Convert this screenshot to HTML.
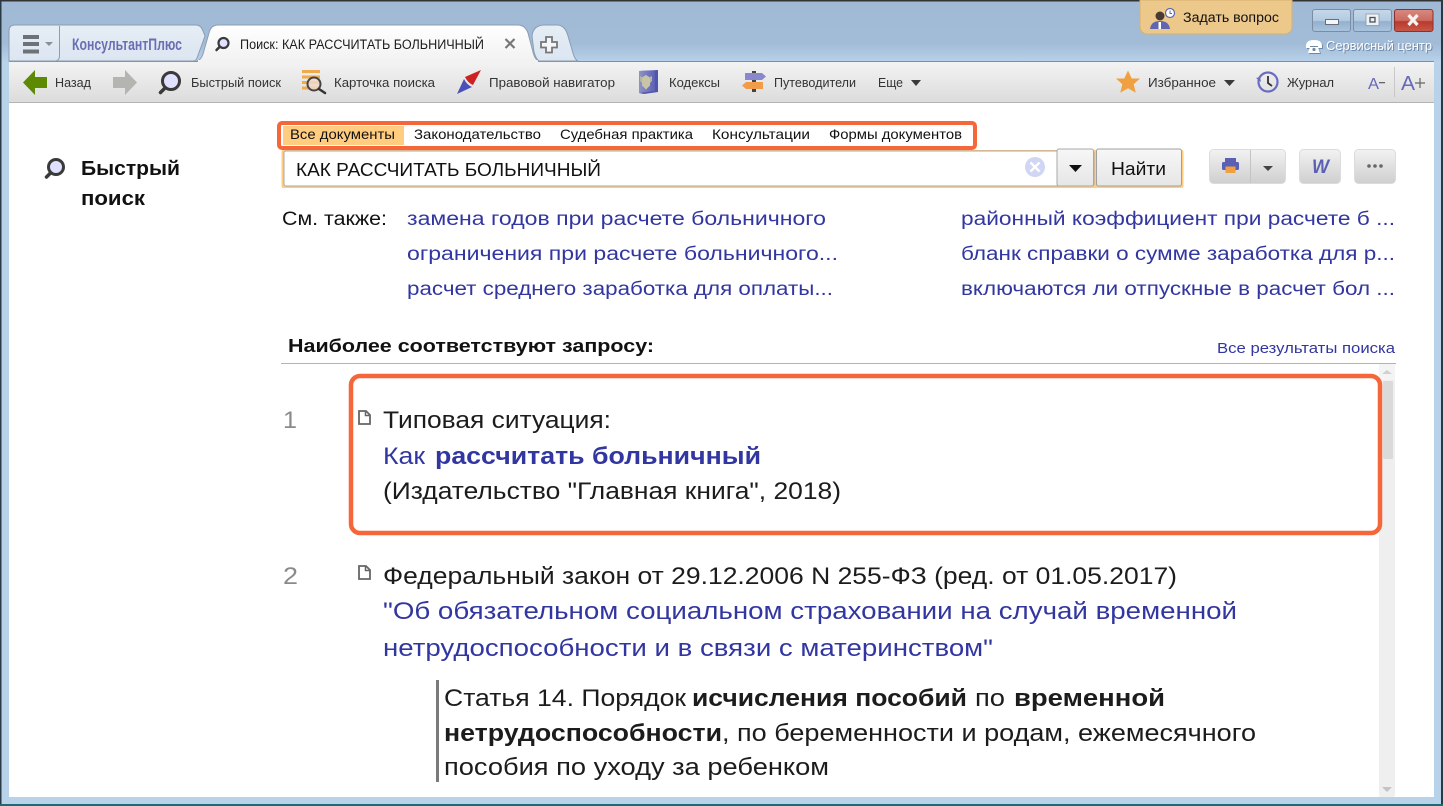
<!DOCTYPE html>
<html lang="ru">
<head>
<meta charset="utf-8">
<title>КонсультантПлюс</title>
<style>
html,body{margin:0;padding:0;width:1443px;height:806px;overflow:hidden;background:#fff}
svg{display:block}
text{font-family:"Liberation Sans","DejaVu Sans",sans-serif;fill:#1c1c1c}
.tb{font-size:13px;fill:#333}
.fl{font-size:14px;fill:#111}
.lk{font-size:19px;fill:#3236a0}
.bg{font-size:24px}
.bl{font-size:24px;fill:#3236a0}
.b{font-weight:bold}
</style>
</head>
<body>
<svg width="1443" height="806" viewBox="0 0 1443 806" xmlns="http://www.w3.org/2000/svg">
<defs>
<linearGradient id="fr" x1="0" y1="0" x2="0" y2="1"><stop offset="0" stop-color="#a0bad6"/><stop offset=".7" stop-color="#a2bcd8"/><stop offset="1" stop-color="#b8d2ea"/></linearGradient>
<linearGradient id="tbg" x1="0" y1="0" x2="0" y2="1"><stop offset="0" stop-color="#f3f3f3"/><stop offset="1" stop-color="#dcdcdc"/></linearGradient>
<linearGradient id="tab" x1="0" y1="0" x2="0" y2="1"><stop offset="0" stop-color="#ffffff"/><stop offset="1" stop-color="#f2f2f2"/></linearGradient>
<linearGradient id="tb2" x1="0" y1="0" x2="0" y2="1"><stop offset="0" stop-color="#e6edf5"/><stop offset="1" stop-color="#dce6f1"/></linearGradient>
<linearGradient id="btn" x1="0" y1="0" x2="0" y2="1"><stop offset="0" stop-color="#f2f2f2"/><stop offset="1" stop-color="#cfcfcf"/></linearGradient>
<linearGradient id="btn2" x1="0" y1="0" x2="0" y2="1"><stop offset="0" stop-color="#f7f7f7"/><stop offset="1" stop-color="#e6e6e6"/></linearGradient>
<linearGradient id="wb" x1="0" y1="0" x2="0" y2="1"><stop offset="0" stop-color="#c6d8ea"/><stop offset=".5" stop-color="#b4cbe2"/><stop offset=".55" stop-color="#94b0cd"/><stop offset="1" stop-color="#aac4de"/></linearGradient>
<linearGradient id="wc" x1="0" y1="0" x2="0" y2="1"><stop offset="0" stop-color="#d88a80"/><stop offset=".5" stop-color="#cc6a60"/><stop offset=".55" stop-color="#b83a2c"/><stop offset="1" stop-color="#c8584a"/></linearGradient>
<linearGradient id="bk" x1="0" y1="0" x2="1" y2="0"><stop offset="0" stop-color="#8f94c6"/><stop offset="1" stop-color="#5b60b4"/></linearGradient>
</defs>

<!-- window frame -->
<rect width="1443" height="806" fill="#b8d2ea"/>
<rect x="0" y="0" width="1443" height="62" fill="url(#fr)"/>
<rect x="0" y="62" width="9" height="736" fill="#b8d2ea"/>
<rect x="0" y="0" width="1443" height="1.5" fill="#333"/>
<rect x="0" y="0" width="1.5" height="806" fill="#2a3a44"/>
<rect x="1441" y="0" width="2" height="806" fill="#2a3a44"/>
<rect x="0" y="804" width="1443" height="2" fill="#1c6a78"/>
<rect x="9" y="62" width="1425" height="735" fill="#fff"/>

<!-- toolbar -->
<rect x="9" y="62" width="1425" height="40" fill="url(#tbg)"/>
<rect x="9" y="102" width="1425" height="1" fill="#b4b4b4"/>
<rect x="9" y="61" width="1425" height="1" fill="#7f8fa3"/>

<!-- tabs -->
<path d="M9 61V31Q9 25 15 25H196Q201 25 203 31L205 36L197 58Q196 61 193 61Z" fill="url(#tb2)" stroke="#8a9db3"/>
<path d="M59.500 26V56Q59.500 60 56 61" fill="none" stroke="#8a9db3"/>
<rect x="23" y="35" width="16" height="4" fill="#6d7278"/><rect x="23" y="42" width="16" height="4" fill="#6d7278"/><rect x="23" y="49.500" width="16" height="4" fill="#6d7278"/>
<path d="M45 42h8l-4 4z" fill="#8a8f96"/>
<text x="72" y="50" font-size="16.500" font-weight="bold" style="fill:#6a6eb4" textLength="110" lengthAdjust="spacingAndGlyphs">КонсультантПлюс</text>
<path d="M197 61Q201 60 203 54L209 33Q211 25 218 25H518Q525 25 528 33L533 52Q535 60 539 61Z" fill="url(#tab)" stroke="#8a9db3"/>
<rect x="198" y="60" width="340" height="3" fill="#f2f2f2"/>
<circle cx="223.500" cy="43" r="5" fill="#e0e0ff" stroke="#3a3a3a" stroke-width="2.200"/>
<path d="M219.500 47l-3 3" stroke="#3a3a3a" stroke-width="2.500" stroke-linecap="round"/>
<text x="240" y="49" font-size="13.500" textLength="244" lengthAdjust="spacingAndGlyphs">Поиск: КАК РАССЧИТАТЬ БОЛЬНИЧНЫЙ</text>
<path d="M505.500 39l9 9m0-9l-9 9" stroke="#777" stroke-width="2.200" fill="none"/>
<path d="M532 36Q533 25 545 25H557Q565 25 568 36L573 53Q575 60 578 61H539Q536 59 534 52Z" fill="url(#tb2)" stroke="#8a9db3"/>
<path d="M546 37h6v5h5v5.500h-5v5h-6v-5h-5v-5.500h5z" fill="#f4f6f9" stroke="#777" stroke-width="1.800"/>

<!-- ask button -->
<path d="M1140 0H1292V26Q1292 34 1284 34H1148Q1140 34 1140 26Z" fill="#ecc88a" stroke="#d8b170"/>
<circle cx="1160" cy="16" r="4.500" fill="#4a3a34"/>
<path d="M1150 29q1-8 10-8t10 8z" fill="#6066b0"/>
<rect x="1158.500" y="22" width="2.500" height="7" fill="#fff"/>
<circle cx="1170" cy="13" r="4.500" fill="#fff" stroke="#6066b0" stroke-width="1.200"/>
<path d="M1170 10.500v3h2" stroke="#6066b0" fill="none"/>
<text x="1183" y="22" font-size="13.500" textLength="96" lengthAdjust="spacingAndGlyphs" style="fill:#111">Задать вопрос</text>

<!-- window buttons -->
<rect x="1312.500" y="9.500" width="38" height="22" rx="2.500" fill="url(#wb)" stroke="#7a8da3"/>
<rect x="1325.500" y="19.500" width="13" height="5" fill="#f4f6f9" stroke="#66707c"/>
<rect x="1353.500" y="9.500" width="38" height="22" rx="2.500" fill="url(#wb)" stroke="#7a8da3"/>
<rect x="1366" y="14" width="13" height="11.500" fill="#eef1f5" stroke="#8a98a8" stroke-width=".8"/>
<rect x="1370" y="17.500" width="5" height="4.500" fill="#eef1f5" stroke="#4a5058" stroke-width="1.300"/>
<rect x="1394.500" y="9.500" width="38.500" height="22" rx="2.500" fill="url(#wc)" stroke="#8c3028"/>
<path d="M1408.500 15l9 10m0-10l-9 10" stroke="#f6f2f0" stroke-width="3.200" fill="none"/>
<g style="filter:drop-shadow(1px 1px 0 #6f88a6)">
<path d="M1306 46q0-6 8-6t8 6v2h-4v-2h-8v2h-4z" fill="#fff"/>
<path d="M1310 47h8l2 6h-12z" fill="#fff"/><circle cx="1314" cy="49.500" r="1.600" fill="#6f88a6"/>
<text x="1326" y="50" font-size="12.500" textLength="106" lengthAdjust="spacingAndGlyphs" style="fill:#fff">Сервисный центр</text>
</g>

<!-- toolbar items -->
<path d="M23 82.500L35 70v7h12v11H35v7z" fill="#5c8a00"/>
<text class="tb" x="55" y="87" textLength="36" lengthAdjust="spacingAndGlyphs">Назад</text>
<path d="M137 82.500L125 70v7H113v11h12v7z" fill="#b4b4b0"/>
<circle cx="171" cy="81" r="8.500" fill="#e0e0ff" stroke="#3a3a3a" stroke-width="3"/>
<path d="M165 88l-4.500 4.500" stroke="#3a3a3a" stroke-width="3.500" stroke-linecap="round"/>
<text class="tb" x="191" y="87" textLength="90" lengthAdjust="spacingAndGlyphs">Быстрый поиск</text>
<g fill="#eeaa4c"><rect x="302" y="70" width="18" height="3"/><rect x="302" y="75.500" width="18" height="3"/><rect x="302" y="81" width="18" height="3"/><rect x="302" y="86.500" width="18" height="3"/></g>
<circle cx="314" cy="84" r="6.500" fill="#f0d8c8" fill-opacity=".85" stroke="#444" stroke-width="2"/>
<path d="M319 89l6 4" stroke="#333" stroke-width="2.500" stroke-linecap="round"/>
<text class="tb" x="334" y="87" textLength="101" lengthAdjust="spacingAndGlyphs">Карточка поиска</text>
<path d="M481 70L465 77Q468 83 473 85Z" fill="#cc2222"/>
<path d="M457 94L464 79Q467 85 472 87Z" fill="#4a50b8"/>
<text class="tb" x="489" y="87" textLength="126" lengthAdjust="spacingAndGlyphs">Правовой навигатор</text>
<path d="M639 71L658 70V92L644 94L639 93Z" fill="#4f54ac"/>
<path d="M639 71L655 70.500V91L639 93Z" fill="url(#bk)"/>
<path d="M646 75l4 2.500v8l-4 4l-4-4v-8z" fill="#c8c4a8"/>
<path d="M642 77l-2-1v5l2 2zM650 77l2-1v5l-2 2z" fill="#b8b4a0"/>
<text class="tb" x="669" y="87" textLength="51" lengthAdjust="spacingAndGlyphs">Кодексы</text>
<rect x="752" y="71" width="4" height="21" fill="#444"/>
<path d="M745 73H762L766 76.500L762 80H745Z" fill="#8a88cc"/>
<path d="M746 82H763V89H746L742 85.500Z" fill="#f09c48"/>
<text class="tb" x="774" y="87" textLength="82" lengthAdjust="spacingAndGlyphs">Путеводители</text>
<text class="tb" x="878" y="87" textLength="25" lengthAdjust="spacingAndGlyphs">Еще</text>
<path d="M911 80h10l-5 6z" fill="#3a3a3a"/>
<path d="M1128 70.500l3.700 8h8.300l-6.300 5.700l2 8.500l-7.700-4.500l-7.700 4.500l2-8.500l-6.300-5.700h8.300z" fill="#f0a040"/>
<text class="tb" x="1148" y="87" textLength="68" lengthAdjust="spacingAndGlyphs">Избранное</text>
<path d="M1224 80h11l-5.500 6z" fill="#3a3a3a"/>
<circle cx="1268" cy="82" r="9.500" fill="none" stroke="#6a6cc0" stroke-width="2.200"/>
<path d="M1256 78l4-1l1 5z" fill="#6a6cc0"/>
<path d="M1268 76v7l4 3" fill="none" stroke="#333" stroke-width="1.800"/>
<text class="tb" x="1287" y="87" textLength="47" lengthAdjust="spacingAndGlyphs">Журнал</text>
<text x="1368" y="89" font-size="16" textLength="11" lengthAdjust="spacingAndGlyphs" style="fill:#6468b8">А</text>
<rect x="1379" y="82" width="6" height="1.300" fill="#666"/>
<rect x="1394" y="67" width="1" height="30" fill="#c8c8c8"/>
<text x="1401" y="90" font-size="20" textLength="14" lengthAdjust="spacingAndGlyphs" style="fill:#6468b8">А</text>
<path d="M1420 78v10m-5-5h10" stroke="#666" stroke-width="1.200" fill="none"/>

<!-- left heading -->
<circle cx="56" cy="167" r="7.500" fill="#e0e0ff" stroke="#3a3a3a" stroke-width="3"/>
<path d="M50.500 173l-4 4" stroke="#3a3a3a" stroke-width="3.500" stroke-linecap="round"/>
<text x="81" y="175" font-size="20" class="b" textLength="99" lengthAdjust="spacingAndGlyphs" style="fill:#111">Быстрый</text>
<text x="81" y="205" font-size="20" class="b" textLength="64" lengthAdjust="spacingAndGlyphs" style="fill:#111">поиск</text>

<!-- filter tabs -->
<rect x="283" y="126" width="121" height="19" fill="#ffcc80"/>
<rect x="279" y="123" width="696" height="25" rx="3" fill="none" stroke="#f5673a" stroke-width="4"/>
<text class="fl" x="290" y="139" textLength="105" lengthAdjust="spacingAndGlyphs">Все документы</text>
<text class="fl" x="414" y="139" textLength="127" lengthAdjust="spacingAndGlyphs">Законодательство</text>
<text class="fl" x="560" y="139" textLength="133" lengthAdjust="spacingAndGlyphs">Судебная практика</text>
<text class="fl" x="712" y="139" textLength="98" lengthAdjust="spacingAndGlyphs">Консультации</text>
<text class="fl" x="829" y="139" textLength="133" lengthAdjust="spacingAndGlyphs">Формы документов</text>

<!-- search box -->
<rect x="281.500" y="150" width="902" height="38" rx="2" fill="#ffcc80"/>
<rect x="284" y="151" width="810" height="35" rx="2" fill="#fff" stroke="#a8a8a8"/>
<text x="296" y="176" font-size="18.500" textLength="305" lengthAdjust="spacingAndGlyphs" style="fill:#111">КАК РАССЧИТАТЬ БОЛЬНИЧНЫЙ</text>
<circle cx="1035" cy="167" r="10" fill="#d0d6f4"/>
<path d="M1030.500 162.500l9 9m0-9l-9 9" stroke="#fff" stroke-width="2.400" fill="none"/>
<rect x="1057" y="149" width="36.500" height="37" rx="2" fill="url(#btn2)" stroke="#a8a8a8"/>
<path d="M1069 165h13l-6.500 7z" fill="#111"/>
<rect x="1096.500" y="149" width="85" height="37" rx="2" fill="url(#btn2)" stroke="#a0a0a0"/>
<text x="1111" y="175" font-size="18.500" textLength="55" lengthAdjust="spacingAndGlyphs" style="fill:#111">Найти</text>

<!-- action buttons -->
<rect x="1209.500" y="149.500" width="76" height="34" rx="4" fill="url(#btn)" stroke="#dcdcdc"/>
<rect x="1250" y="150" width="1" height="33" fill="#c4c4c4"/>
<rect x="1225" y="158" width="11" height="4" fill="#5b60b4"/>
<rect x="1222" y="162" width="17" height="8" rx="1.500" fill="#5b60b4"/>
<rect x="1225.500" y="166.500" width="10" height="6.500" fill="#f0a040"/>
<path d="M1263 166h10l-5 5z" fill="#444"/>
<rect x="1299.500" y="149.500" width="41" height="34" rx="4" fill="url(#btn)" stroke="#dcdcdc"/>
<text x="1312" y="173" font-size="19" font-style="italic" font-weight="bold" textLength="17" lengthAdjust="spacingAndGlyphs" style="font-family:'Liberation Sans',sans-serif;fill:#5b60b4">W</text>
<rect x="1354.500" y="149.500" width="41" height="34" rx="4" fill="url(#btn)" stroke="#dcdcdc"/>
<circle cx="1369" cy="166" r="1.800" fill="#666"/><circle cx="1375" cy="166" r="1.800" fill="#666"/><circle cx="1381" cy="166" r="1.800" fill="#666"/>

<!-- see also -->
<text x="282" y="225" font-size="19" textLength="105" lengthAdjust="spacingAndGlyphs" style="fill:#111">См. также:</text>
<text class="lk" x="407" y="225" textLength="419" lengthAdjust="spacingAndGlyphs">замена годов при расчете больничного</text>
<text class="lk" x="407" y="260" textLength="431" lengthAdjust="spacingAndGlyphs">ограничения при расчете больничного...</text>
<text class="lk" x="407" y="295" textLength="426" lengthAdjust="spacingAndGlyphs">расчет среднего заработка для оплаты...</text>
<text class="lk" x="961" y="225" textLength="434" lengthAdjust="spacingAndGlyphs">районный коэффициент при расчете б  ...</text>
<text class="lk" x="961" y="260" textLength="434" lengthAdjust="spacingAndGlyphs">бланк справки о сумме заработка для р...</text>
<text class="lk" x="961" y="295" textLength="434" lengthAdjust="spacingAndGlyphs">включаются ли отпускные в расчет бол ...</text>

<!-- results header -->
<text x="288" y="352" font-size="18" class="b" textLength="366" lengthAdjust="spacingAndGlyphs" style="fill:#111">Наиболее соответствуют запросу:</text>
<text x="1217" y="353" font-size="15" textLength="178" lengthAdjust="spacingAndGlyphs" style="fill:#3236a0">Все результаты поиска</text>
<rect x="281" y="363" width="1115" height="1" fill="#b4b4b4"/>

<!-- scrollbar -->
<rect x="1379" y="364" width="16" height="433" rx="2" fill="#efefef"/>
<rect x="1379" y="364" width="16" height="16" fill="#f4f4f4"/>
<path d="M1382 374l5-4l5 4z" fill="#d0d0d0"/>
<rect x="1383" y="381" width="10" height="78" rx="1" fill="#dadada"/>
<path d="M1382 787h10l-5 5z" fill="#c4c4c4"/>

<!-- result 1 -->
<rect x="351" y="376" width="1029" height="157" rx="9" fill="none" stroke="#f5673a" stroke-width="4.500"/>
<text x="283" y="428" font-size="24" textLength="14" lengthAdjust="spacingAndGlyphs" style="fill:#8a8a8a">1</text>
<path d="M359 411H366L370 415V424H359Z" fill="#fff" stroke="#666" stroke-width="1.800"/>
<path d="M365.500 411v4.500H370" fill="none" stroke="#666" stroke-width="1.500"/>
<text class="bg" x="383" y="428" textLength="228" lengthAdjust="spacingAndGlyphs">Типовая ситуация:</text>
<text class="bl" x="383" y="464" textLength="42" lengthAdjust="spacingAndGlyphs">Как</text>
<text class="bl b" x="435" y="464" textLength="326" lengthAdjust="spacingAndGlyphs">рассчитать больничный</text>
<text class="bg" x="383" y="499" textLength="458" lengthAdjust="spacingAndGlyphs">(Издательство "Главная книга", 2018)</text>

<!-- result 2 -->
<text x="283" y="584" font-size="24" textLength="15" lengthAdjust="spacingAndGlyphs" style="fill:#8a8a8a">2</text>
<path d="M359 566H366L370 570V579H359Z" fill="#fff" stroke="#666" stroke-width="1.800"/>
<path d="M365.500 566v4.500H370" fill="none" stroke="#666" stroke-width="1.500"/>
<text class="bg" x="383" y="584" textLength="794" lengthAdjust="spacingAndGlyphs">Федеральный закон от 29.12.2006 N 255-ФЗ (ред. от 01.05.2017)</text>
<text class="bl" x="383" y="619" textLength="854" lengthAdjust="spacingAndGlyphs">"Об обязательном социальном страховании на случай временной</text>
<text class="bl" x="383" y="656" textLength="610" lengthAdjust="spacingAndGlyphs">нетрудоспособности и в связи с материнством"</text>
<rect x="436" y="680" width="3" height="102" fill="#7a7a7a"/>
<text class="bg" x="444" y="706" textLength="242" lengthAdjust="spacingAndGlyphs">Статья 14. Порядок</text>
<text class="bg b" x="692" y="706" textLength="275" lengthAdjust="spacingAndGlyphs">исчисления пособий</text>
<text class="bg" x="975" y="706" textLength="30" lengthAdjust="spacingAndGlyphs">по</text>
<text class="bg b" x="1014" y="706" textLength="151" lengthAdjust="spacingAndGlyphs">временной</text>
<text class="bg b" x="444" y="741" textLength="278" lengthAdjust="spacingAndGlyphs">нетрудоспособности</text>
<text class="bg" x="722" y="741" textLength="534" lengthAdjust="spacingAndGlyphs">, по беременности и родам, ежемесячного</text>
<text class="bg" x="444" y="775" textLength="385" lengthAdjust="spacingAndGlyphs">пособия по уходу за ребенком</text>
</svg>
</body>
</html>
